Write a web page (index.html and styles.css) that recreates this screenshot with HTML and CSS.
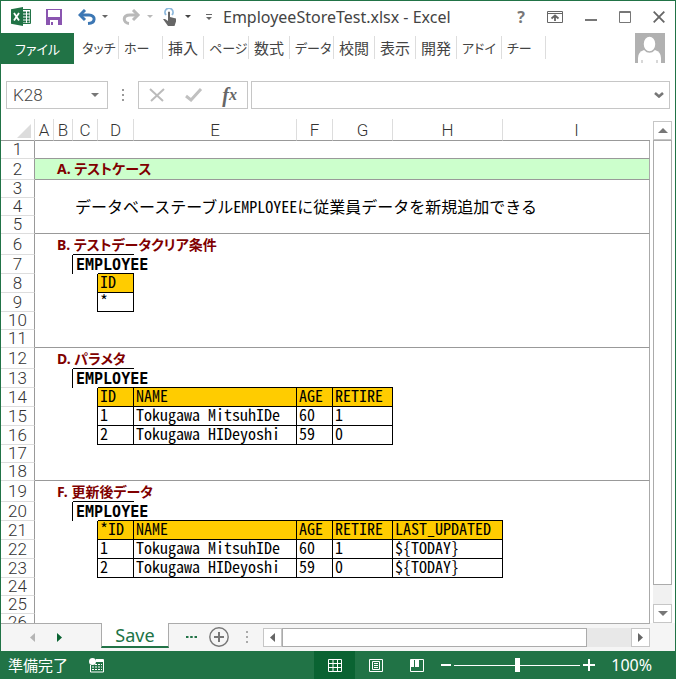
FILE: index.html
```html
<!DOCTYPE html>
<html lang="ja">
<head>
<meta charset="utf-8">
<title>EmployeeStoreTest.xlsx - Excel</title>
<link rel="stylesheet" href="styles.css">
</head>
<body>
<div class="window">
  <header class="titlebar">
    <div class="quick">
      <svg class="logo" width="20" height="20" viewBox="0 0 20 20"><path d="M10 2.500h9.500v14h-9.500" fill="#fff" stroke="#217346"/><path d="M12 5.500h3m1 0h2.500M12 8.500h3m1 0h2.500M12 11.500h3m1 0h2.500M12 14.500h3m1 0h2.500" stroke="#217346" stroke-width="2"/><path d="M0 2.200L12 0v19L0 16.800z" fill="#217346"/><path d="M3 6l5 7.500M8 6l-5 7.500" stroke="#fff" stroke-width="1.800"/></svg>
      <button class="tool save" aria-label="Save"><svg width="16" height="16" viewBox="0 0 16 16"><path d="M0 0h16v16H0z" fill="#8a55b0"/><path d="M2 1h12v7H2zM4 11h8v5H4z" fill="#fff"/><path d="M5 13h2v3H5z" fill="#8a55b0"/></svg></button>
      <button class="tool undo" aria-label="Undo"><svg width="30" height="16" viewBox="0 0 30 16"><path d="M2 6h9c7 0 7 8-1 8.500" fill="none" stroke="#3c77b4" stroke-width="3"/><path d="M7 1L2 6l5 5" fill="none" stroke="#3c77b4" stroke-width="3"/><path d="M24 6h6l-3 3z" fill="#666"/></svg></button>
      <button class="tool redo" aria-label="Redo"><svg width="31" height="16" viewBox="0 0 31 16"><path d="M16 6H8c-8 0-7 8-1 8.500" fill="none" stroke="#b9b9b9" stroke-width="3"/><path d="M11 1l5 5-5 5" fill="none" stroke="#b9b9b9" stroke-width="3"/><path d="M25 6h6l-3 3z" fill="#b9b9b9"/></svg></button>
      <button class="tool touch" aria-label="Touch mode"><svg width="28" height="18" viewBox="0 0 28 18"><path d="M3 7a4 4 0 1 1 6 0" fill="none" stroke="#8db8dc" stroke-width="1.800"/><path d="M5 4q1-1 2 0v5l6 1.500v3L11.500 18H5L0 11h2l3 2z" fill="#666"/><path d="M22 7h6l-3 3z" fill="#444"/></svg></button>
      <button class="tool more" aria-label="Customize"><svg width="6" height="8" viewBox="0 0 6 8"><path d="M0 1.500h6" stroke="#666"/><path d="M0 4h6L3 7z" fill="#666"/></svg></button>
    </div>
    <h1>EmployeeStoreTest.xlsx - Excel</h1>
    <div class="controls">
      <button aria-label="Help" class="help">?</button>
      <button aria-label="Ribbon display"><svg width="16" height="12" viewBox="0 0 16 12"><path d="M.5 .5h15v11H.5zM1 2.500h14" fill="none" stroke="#666"/><path d="M8 10V5M4.500 7.500L8 4.500l3.500 3" fill="none" stroke="#666" stroke-width="1.800"/></svg></button>
      <button aria-label="Minimize"><svg width="12" height="12" viewBox="0 0 12 12"><path d="M0 9h12" stroke="#777" stroke-width="2"/></svg></button>
      <button aria-label="Maximize"><svg width="12" height="12" viewBox="0 0 12 12"><path d="M.5 .5h11v11H.5zM0 1.500h12" fill="none" stroke="#777"/></svg></button>
      <button aria-label="Close"><svg width="12" height="12" viewBox="0 0 12 12"><path d="M.7 .7l10.600 10.600M11.300 .7L.7 11.300" stroke="#666" stroke-width="1.800"/></svg></button>
    </div>
  </header>

  <div class="ribbon">
    <nav class="tabs">
      <button class="file kana">ファイル</button>
      <button class="kana">タッチ</button><button class="kana">ホー</button><button>挿入</button><button class="kana">ページ</button><button>数式</button><button class="kana">データ</button><button>校閲</button><button>表示</button><button>開発</button><button class="kana">アドイ</button><button class="kana">チー</button>
    </nav>
    <svg class="avatar" width="30" height="30" viewBox="0 0 30 30"><path d="M0 0h30v30H0z" fill="#b1b1b1"/><path d="M3 30v-5q0-6 6-8h11q6 2 6 8v5z" fill="#fff"/><ellipse cx="14.500" cy="11" rx="6.500" ry="8" fill="#fff" stroke="#b1b1b1" stroke-width="1.500"/><path d="M7 30v-3M22 30v-3" stroke="#b1b1b1"/></svg>
  </div>

  <div class="formulabar">
    <div class="namebox"><input aria-label="Name box" value="K28"><button aria-label="Names"><svg width="8" height="4" viewBox="0 0 8 4"><path d="M0 0h8L4 4z" fill="#777"/></svg></button></div>
    <svg class="grip" width="2" height="12" viewBox="0 0 2 12"><path d="M0 1h2M0 6h2M0 11h2" stroke="#999" stroke-width="2"/></svg>
    <div class="entry">
      <button aria-label="Cancel"><svg width="16" height="14" viewBox="0 0 16 14"><path d="M1 1l13 12M15 1L2 13" stroke="#bbb" stroke-width="2"/></svg></button>
      <button aria-label="Enter"><svg width="18" height="14" viewBox="0 0 18 14"><path d="M1 8l5 4L16 1" fill="none" stroke="#c0c0c0" stroke-width="3"/></svg></button>
      <button aria-label="Insert function" class="fx">f<small>x</small></button>
    </div>
    <div class="formula"><input aria-label="Formula"><button aria-label="Expand"><svg width="10" height="6" viewBox="0 0 10 6"><path d="M1 1l4 3.500L9 1" fill="none" stroke="#777" stroke-width="2.600"/></svg></button></div>
  </div>

  <main class="workspace">
    <div class="sheet">
      <table>
        <colgroup><col class="w-head"><col class="w-a"><col class="w-b"><col class="w-c"><col class="w-d"><col class="w-e"><col class="w-f"><col class="w-g"><col class="w-h"><col></colgroup>
        <thead><tr><th class="corner"><svg width="14" height="14" viewBox="0 0 14 14"><path d="M14 0v14H0z" fill="#dcdcdc"/></svg></th><th>A</th><th>B</th><th>C</th><th>D</th><th>E</th><th>F</th><th>G</th><th>H</th><th>I</th></tr></thead>
        <tbody>
          <tr class="rule"><th>1</th><td colspan="9"></td></tr>
          <tr class="tall rule green"><th>2</th><td></td><td class="title">A. テストケース</td><td colspan="7"></td></tr>
          <tr><th>3</th><td colspan="9"></td></tr>
          <tr><th>4</th><td colspan="2"></td><td class="note">データベーステーブルEMPLOYEEに従業員データを新規追加できる</td><td colspan="6"></td></tr>
          <tr class="rule"><th>5</th><td colspan="9"></td></tr>
          <tr class="tall"><th>6</th><td></td><td class="title">B. テストデータクリア条件</td><td class="under"></td><td class="under"></td><td colspan="5"></td></tr>
          <tr class="mid"><th>7</th><td colspan="2" class="side"></td><td class="name">EMPLOYEE</td><td class="under"></td><td colspan="5"></td></tr>
          <tr class="mid"><th>8</th><td colspan="3" class="side"></td><td class="head">ID</td><td colspan="5"></td></tr>
          <tr class="mid"><th>9</th><td colspan="3" class="side"></td><td class="box">*</td><td colspan="5"></td></tr>
          <tr><th>10</th><td colspan="9"></td></tr>
          <tr class="rule"><th>11</th><td colspan="9"></td></tr>
          <tr class="tall"><th>12</th><td></td><td class="title">D. パラメタ</td><td class="under"></td><td class="under"></td><td colspan="5"></td></tr>
          <tr class="mid"><th>13</th><td colspan="2" class="side"></td><td class="name">EMPLOYEE</td><td colspan="4" class="under"></td><td colspan="2"></td></tr>
          <tr class="mid"><th>14</th><td colspan="3" class="side"></td><td class="head">ID</td><td class="head">NAME</td><td class="head">AGE</td><td class="head">RETIRE</td><td colspan="2"></td></tr>
          <tr class="mid"><th>15</th><td colspan="3" class="side"></td><td class="box">1</td><td class="box">Tokugawa MitsuhIDe</td><td class="box">60</td><td class="box">1</td><td colspan="2"></td></tr>
          <tr class="mid"><th>16</th><td colspan="3" class="side"></td><td class="box">2</td><td class="box">Tokugawa HIDeyoshi</td><td class="box">59</td><td class="box">0</td><td colspan="2"></td></tr>
          <tr><th>17</th><td colspan="9"></td></tr>
          <tr class="rule"><th>18</th><td colspan="9"></td></tr>
          <tr class="tall"><th>19</th><td></td><td class="title">F. 更新後データ</td><td class="under"></td><td class="under"></td><td colspan="5"></td></tr>
          <tr class="mid"><th>20</th><td colspan="2" class="side"></td><td class="name">EMPLOYEE</td><td colspan="5" class="under"></td><td></td></tr>
          <tr class="mid"><th>21</th><td colspan="3" class="side"></td><td class="head">*ID</td><td class="head">NAME</td><td class="head">AGE</td><td class="head">RETIRE</td><td class="head">LAST_UPDATED</td><td></td></tr>
          <tr class="mid"><th>22</th><td colspan="3" class="side"></td><td class="box">1</td><td class="box">Tokugawa MitsuhIDe</td><td class="box">60</td><td class="box">1</td><td class="box">${TODAY}</td><td></td></tr>
          <tr class="mid"><th>23</th><td colspan="3" class="side"></td><td class="box">2</td><td class="box">Tokugawa HIDeyoshi</td><td class="box">59</td><td class="box">0</td><td class="box">${TODAY}</td><td></td></tr>
          <tr><th>24</th><td colspan="9"></td></tr>
          <tr><th>25</th><td colspan="9"></td></tr>
          <tr><th>26</th><td colspan="9"></td></tr>
        </tbody>
      </table>
    </div>
    <div class="vscroll">
      <button aria-label="Scroll up"><svg width="10" height="5" viewBox="0 0 10 5"><path d="M0 5h10L5 0z" fill="#777"/></svg></button>
      <div class="thumb"></div><div class="track"></div>
      <button aria-label="Scroll down"><svg width="10" height="5" viewBox="0 0 10 5"><path d="M0 0h10L5 5z" fill="#777"/></svg></button>
    </div>
  </main>

  <div class="sheetbar">
    <div class="sheets">
      <button aria-label="Previous sheet"><svg width="5" height="9" viewBox="0 0 5 9"><path d="M5 0v9L0 4.500z" fill="#b5b5b5"/></svg></button>
      <button aria-label="Next sheet"><svg width="5" height="9" viewBox="0 0 5 9"><path d="M0 0v9l5-4.500z" fill="#0a6332"/></svg></button>
    </div>
    <button class="sheettab">Save</button>
    <button class="dots" aria-label="More sheets"><svg width="11" height="2" viewBox="0 0 11 2"><path d="M0 1h2.500M4.200 1h2.500M8.500 1h2.500" stroke="#217346" stroke-width="2"/></svg></button>
    <button class="add" aria-label="New sheet"><svg width="20" height="20" viewBox="0 0 20 20"><circle cx="10" cy="10" r="9.200" fill="none" stroke="#777" stroke-width="1.400"/><path d="M10 5v10M5 10h10" stroke="#777" stroke-width="2"/></svg></button>
    <svg class="grip" width="2" height="12" viewBox="0 0 2 12"><path d="M0 1h2M0 6h2M0 11h2" stroke="#aaa" stroke-width="2"/></svg>
    <div class="hscroll">
      <button aria-label="Scroll left"><svg width="5" height="9" viewBox="0 0 5 9"><path d="M5 0v9L0 4.500z" fill="#666"/></svg></button>
      <div class="thumb"></div><div class="track"></div>
      <button aria-label="Scroll right"><svg width="5" height="9" viewBox="0 0 5 9"><path d="M0 0v9l5-4.500z" fill="#666"/></svg></button>
    </div>
  </div>

  <footer class="status">
    <span>準備完了</span>
    <button class="macro" aria-label="Record macro"><svg width="15" height="15" viewBox="0 0 15 15"><path d="M7 1.500h7.500v12.500H1.500V7" fill="none" stroke="#fff"/><path d="M7 3h7" stroke="#fff" stroke-width="2"/><circle cx="3.500" cy="3.500" r="3.500" fill="#fff"/><path d="M6 6.500h7M3 9h10M3 11.500h10" stroke="#fff" stroke-dasharray="2 1"/></svg></button>
    <div class="views">
      <button class="on" aria-label="Normal"><svg width="14" height="13" viewBox="0 0 14 13"><path d="M.5 .5h13v12H.5zM0 4.500h14M0 8.500h14M5 0v13M9.500 0v13" fill="none" stroke="#fff"/></svg></button>
      <button aria-label="Page layout"><svg width="14" height="13" viewBox="0 0 14 13"><path d="M.5 .5h13v12H.5zM3.500 2.500h7v8h-7zM5 4.500h4M5 6.500h4M5 8.500h4" fill="none" stroke="#fff"/></svg></button>
      <button aria-label="Page break"><svg width="14" height="13" viewBox="0 0 14 13"><path d="M.5 .5h13v12H.5z" fill="none" stroke="#fff"/><path d="M1 1h3v7H1zM5 1h4v7H5z" fill="#fff"/></svg></button>
    </div>
    <button class="zoombtn" aria-label="Zoom out"><svg width="10" height="12" viewBox="0 0 10 12"><path d="M0 6h10" stroke="#fff" stroke-width="2"/></svg></button>
    <input class="zoom" type="range" min="0" max="100" value="50" aria-label="Zoom">
    <button class="zoombtn" aria-label="Zoom in"><svg width="12" height="12" viewBox="0 0 12 12"><path d="M0 6h12M6 0v12" stroke="#fff" stroke-width="2"/></svg></button>
    <span class="percent">100%</span>
  </footer>
</div>
</body>
</html>
```
FILE: styles.css
```css
* { box-sizing: border-box; }

body {
  margin: 0;
  font: 15px/20px "Noto Sans", "Noto Sans CJK JP", sans-serif;
  color: #444;
}

button, input { font: inherit; color: inherit; border: 0; padding: 0; margin: 0; background: none; }
button { display: flex; align-items: center; justify-content: center; white-space: nowrap; }
svg { display: block; flex: none; }

.window {
  display: flex;
  flex-direction: column;
  height: 100vh;
  border: 1px solid #217346;
  border-bottom: 0;
  background: #fff;
}

/* Title bar */
.titlebar { display: flex; align-items: center; height: 32px; padding: 0 10px; }
.quick { display: flex; align-items: center; width: 212px; }
.save { margin-left: 15px; }
.undo { margin-left: 16px; }
.redo { margin-left: 14px; }
.touch { margin-left: 10px; }
.more { margin-left: 15px; }
h1 { flex: 1; margin: 0; font-size: 16px; font-weight: 400; white-space: nowrap; }
.controls { display: flex; align-items: center; gap: 22px; }
.help { font-size: 16px; font-weight: 700; color: #777; }

/* Ribbon */
.ribbon { display: flex; justify-content: space-between; height: 48px; padding-right: 10px; }
.tabs {
  display: grid;
  grid-template-columns: 73px 45px 44px 41px 45px 41px 44px 41px 41px 41px 45px 44px;
  height: 31px;
  font: 15px/20px "Noto Sans CJK JP", sans-serif;
  font-feature-settings: "palt";
}
.tabs button { justify-content: flex-start; height: 23px; margin-top: 3px; padding-left: 5px; border-right: 1px solid #ddd; }
.tabs button:nth-child(2) { padding-left: 8px; }
.tabs .kana { font-size: 13px; }
.tabs .file { justify-content: center; height: 31px; margin: 0; padding: 0; border: 0; background: #217346; color: #fff; }

/* Formula bar */
.formulabar { display: flex; align-items: center; height: 28px; padding: 0 5px; }
.namebox, .entry, .formula { display: flex; align-items: center; height: 28px; border: 1px solid #c6c6c6; }
.namebox { width: 102px; padding: 0 8px 0 6px; }
.namebox input { flex: 1; min-width: 0; font: 300 17px/20px Roboto, sans-serif; }
.formulabar .grip { margin: 0 14px; }
.entry { width: 110px; justify-content: space-between; padding: 0 10px; }
.fx { font: italic 700 20px/24px "Liberation Serif", serif; color: #666; }
.fx small { font-size: 16px; }
.formula { flex: 1; margin-left: 3px; padding: 0 5px; }
.formula input { flex: 1; min-width: 0; }

/* Worksheet */
.workspace { display: flex; flex: 1; min-height: 0; padding: 10px 3px 0 0; }
.sheet { flex: 1; min-width: 0; overflow: hidden; }
table { width: 100%; table-layout: fixed; border-collapse: separate; border-spacing: 0; }
.w-head { width: 34px; }
.w-a, .w-b { width: 19px; }
.w-c { width: 25px; }
.w-d, .w-f { width: 36px; }
.w-e { width: 163px; }
.w-g { width: 60px; }
.w-h { width: 110px; }

th, td { height: 18px; padding: 0; white-space: nowrap; vertical-align: middle; }
th { font: 300 17px/17px Roboto, sans-serif; color: #333; }
thead th { height: 22px; padding-top: 2px; border-right: 1px solid #ddd; border-bottom: 1px solid #999; }
thead th:last-child { border-right: 0; }
.corner svg { margin-left: 16px; }
tbody th { border-right: 1px solid #999; border-bottom: 1px solid #ddd; }
td { color: #000; font: 16px/16px "Noto Sans CJK JP", sans-serif; font-feature-settings: "hwid"; }
td:last-child { border-right: 1px solid #aaa; }
.tall > * { height: 21px; }
.mid > * { height: 19px; }
.rule td { border-bottom: 1px solid #999; }
.green td { background: #cfc; }
.title { padding-left: 3px; color: #800000; font: 700 14px/18px "Noto Sans", "Noto Sans CJK JP", sans-serif; font-feature-settings: "palt"; }
.note { padding-left: 2px; vertical-align: top; }
.name { padding-left: 3px; font: 700 15px/16px "DejaVu Sans Mono", monospace; }
.side { border-right: 1px solid #000; }
.under { border-bottom: 1px solid #000; }
.box, .head { padding-left: 2px; border-right: 1px solid #000; border-bottom: 1px solid #000; line-height: 14px; vertical-align: top; }
.head { background: #fc0; }

/* Scroll bars */
.vscroll { display: flex; flex-direction: column; width: 19px; margin: 2px 0 0 3px; }
.vscroll button, .hscroll button { flex: none; width: 19px; height: 19px; border: 1px solid #c6c6c6; background: #fff; }
.thumb { border: 1px solid #ababab; background: #fff; }
.vscroll .thumb { flex: 446; }
.vscroll .track { flex: 19; background: #f1f1f1; }
.hscroll { display: flex; flex: 1; height: 19px; }
.hscroll .thumb { flex: 305; }
.hscroll .track { flex: 44; background: #e8e8e8; }

/* Sheet tabs */
.sheetbar { display: flex; align-items: center; height: 28px; padding-right: 25px; background: linear-gradient(#ababab, #ababab) 0 0 / 649px 1px no-repeat #f5f5f5; }
.sheets { display: flex; gap: 22px; width: 100px; padding-left: 29px; }
.sheettab { align-self: flex-start; width: 68px; height: 25px; border: 1px solid #ababab; border-top: 0; border-bottom: 2px solid #217346; background: #fff; color: #217346; font-size: 18px; }
.dots { margin: 0 12px 0 17px; }
.sheetbar .grip { margin: 0 15px 0 17px; }

/* Status bar */
.status { display: flex; align-items: center; height: 28px; padding: 0 23px 0 7px; background: #217346; color: #fff; white-space: nowrap; }
.macro { margin-left: 21px; }
.views { display: flex; align-self: stretch; margin-left: auto; }
.views button { width: 41px; }
.views .on { background: #0a6332; }
.zoombtn { width: 12px; }
.views + .zoombtn { margin-left: 3px; }
.zoom { appearance: none; width: 126px; height: 14px; margin: 0 3px 0 2px; background: linear-gradient(#fff, #fff) center / 100% 1px no-repeat; }
.zoom::-webkit-slider-thumb { appearance: none; width: 5px; height: 14px; background: #fff; }
.percent { margin-left: 16px; font-size: 16px; }
```
